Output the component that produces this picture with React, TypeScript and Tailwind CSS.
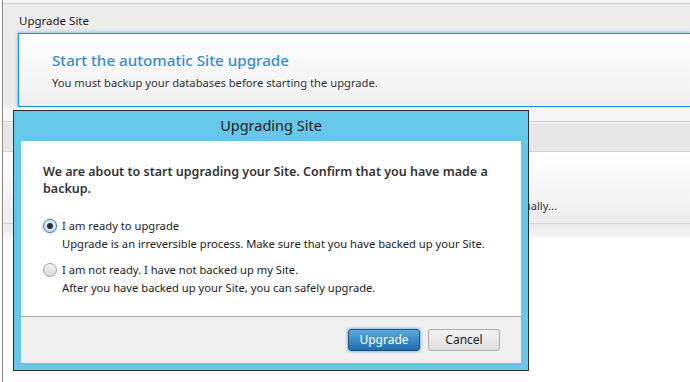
import React from 'react';

function Radio({ checked }: { checked?: boolean }) {
  if (checked) {
    return (
      <span className="flex h-[14px] w-[14px] shrink-0 items-center justify-center rounded-full border border-[#3d7bad] bg-gradient-to-b from-[#e4f1fb] to-[#c4def2] shadow-[0_0_2px_rgba(60,140,210,0.6)]">
        <span className="h-[6px] w-[6px] rounded-full bg-[#2b2b2b]" />
      </span>
    );
  }
  return (
    <span className="block h-[14px] w-[14px] shrink-0 rounded-full border border-[#a3a3a3] bg-gradient-to-b from-[#f6f6f6] to-[#d9d9d9]" />
  );
}

export default function App() {
  return (
    <div className="relative h-[382px] w-[690px] overflow-hidden bg-white font-['Noto_Sans',sans-serif] text-[#333]">
      {/* page behind the dialog */}
      <div className="ml-[2px] flex h-full flex-col border-l border-[#8e8e8e]">
        <div className="h-[3px] bg-[#f4f4f4]" />
        <div className="border-t border-[#cdcdcd] bg-[#ececec] pt-[9px]">
          <div className="pl-[16px] text-[11.5px] leading-[16px] text-[#222]">Upgrade Site</div>
          <div className="ml-[15px] mt-[4px] h-[74px] border-y border-l border-[#1591e4] bg-gradient-to-b from-white to-[#efefef] pl-[33px] pt-[15px] shadow-[0_0_3px_1px_rgba(30,150,230,0.45)]">
            <div className="text-[15.2px] font-medium leading-[22px] text-[#3a8dcc]">Start the automatic Site upgrade</div>
            <div className="mt-[4px] text-[11.2px] leading-[16px] text-[#333]">You must backup your databases before starting the upgrade.</div>
          </div>
        </div>
        <div className="h-[14px] bg-[#f6f6f6]" />
        <div className="border-t border-[#c9c9c9]">
          <div className="h-[30px] border-t border-white border-b border-b-[#d2d2d2] bg-[#e7e7e7]" />
          <div className="h-[72px] border-b border-[#d6d6d6] bg-gradient-to-b from-white via-[#f6f6f6] to-[#ededed] pt-[46px]">
            <div className="w-[554px] text-right text-[11.2px] leading-[16px]">Upgrade manually...</div>
          </div>
          <div className="h-[14px] bg-gradient-to-b from-[#e9e9e9] to-[#f7f7f7]" />
        </div>
      </div>

      {/* modal dialog */}
      <div className="absolute left-[13px] top-[110px] flex h-[261px] w-[516px] flex-col border border-[#2f2f2f] bg-[#65c8e9] px-[7px] pb-[7px]">
        <div className="flex h-[30px] shrink-0 items-center justify-center text-[14.5px] text-[#1a1a1a]">Upgrading Site</div>
        <div className="flex flex-1 flex-col bg-white">
          <div className="flex-1 px-[22px] pt-[22px]">
            <p className="text-[12.5px] font-semibold leading-[17px] text-[#333]">
              We are about to start upgrading your Site. Confirm that you have made a backup.
            </p>
            <div className="mt-[20px] flex flex-col gap-[9px] text-[11.2px] leading-[17.5px] text-[#222]">
              <label className="flex gap-[5px]">
                <span className="pt-[2px]"><Radio checked /></span>
                <span>
                  <span className="block">I am ready to upgrade</span>
                  <span className="block">Upgrade is an irreversible process. Make sure that you have backed up your Site.</span>
                </span>
              </label>
              <label className="flex gap-[5px]">
                <span className="pt-[2px]"><Radio /></span>
                <span>
                  <span className="block">I am not ready. I have not backed up my Site.</span>
                  <span className="block">After you have backed up your Site, you can safely upgrade.</span>
                </span>
              </label>
            </div>
          </div>
          <div className="flex h-[47px] items-center justify-end gap-[8px] border-t border-[#a4a8ac] bg-[#f0f0f0] pr-[21px]">
            <button className="h-[22px] w-[72px] rounded-[3px] border border-[#1c4f7c] bg-gradient-to-b from-[#5aa9de] to-[#1f6fae] text-[12px] text-white shadow-[0_0_3px_1px_rgba(50,130,200,0.5)]">
              Upgrade
            </button>
            <button className="h-[22px] w-[72px] rounded-[3px] border border-[#acacac] bg-gradient-to-b from-[#f4f4f4] to-[#dedede] text-[12px] text-[#222]">
              Cancel
            </button>
          </div>
        </div>
      </div>
    </div>
  );
}
